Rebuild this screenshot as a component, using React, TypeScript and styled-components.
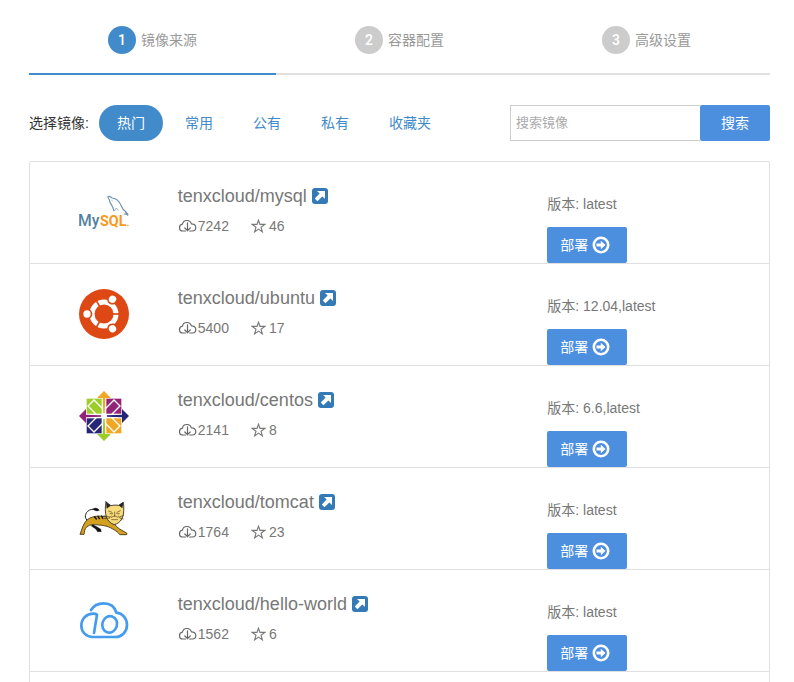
import React from 'react';
import styled, { createGlobalStyle } from 'styled-components';

const GlobalStyle = createGlobalStyle`
  *, *::before, *::after { box-sizing: border-box; }
  body {
    margin: 0;
    background: #fff;
    color: #333;
    font: 14px/20px "Liberation Sans", "Noto Sans CJK SC", sans-serif;
  }
  button, input { font: inherit; }
  svg { display: block; flex: none; }
`;

const Page = styled.main`
  display: flex;
  flex-direction: column;
  min-height: 100vh;
  padding: 6px 24px 0 29px;
`;

const Steps = styled.ol`
  display: grid;
  grid-template-columns: repeat(3, 1fr);
  margin: 0;
  padding: 0;
  list-style: none;
`;

const Step = styled.li<{ $active: boolean }>`
  display: flex;
  justify-content: center;
  align-items: center;
  gap: 5px;
  height: 69px;
  border-bottom: 2px solid ${p => (p.$active ? '#428bca' : '#e0e0e0')};
  color: #999;
`;

const StepNumber = styled.span<{ $active: boolean }>`
  width: 28px;
  height: 28px;
  border-radius: 50%;
  background: ${p => (p.$active ? '#428bca' : '#ccc')};
  color: #fff;
  font-family: Roboto, sans-serif;
  font-weight: 500;
  line-height: 28px;
  text-align: center;
`;

const Toolbar = styled.div`
  display: flex;
  align-items: center;
  justify-content: space-between;
  margin: 30px 0 20px;
`;

const Filters = styled.nav`
  display: flex;
  align-items: center;
  gap: 4px;
  white-space: nowrap;
`;

const FilterLabel = styled.span`
  margin-right: 6px;
`;

const FilterLink = styled.a<{ $active: boolean }>`
  padding: 8px 18px;
  border-radius: 18px;
  background: ${p => (p.$active ? '#428bca' : 'transparent')};
  color: ${p => (p.$active ? '#fff' : '#428bca')};
  text-decoration: none;
`;

const Search = styled.form`
  display: flex;
  width: 260px;
`;

const SearchInput = styled.input`
  flex: 1;
  min-width: 0;
  height: 36px;
  padding: 0 5px 2px;
  border: 1px solid #ccc;
  border-right: 0;
  border-radius: 0;
  font-size: 13px;
  &::placeholder { color: #aaa; opacity: 1; }
`;

const BlueButton = styled.button`
  display: flex;
  align-items: center;
  justify-content: center;
  gap: 4px;
  height: 36px;
  padding: 0 21px;
  border: 0;
  border-radius: 2px;
  background: #4c8fdf;
  color: #fff;
  cursor: pointer;
`;

const DeployButton = styled(BlueButton)`
  padding: 0 17px 0 13px;
`;

const ImageList = styled.ul`
  flex: 1;
  margin: 0;
  padding: 0;
  border: 1px solid #e0e0e0;
  border-bottom: 0;
  border-radius: 2px 2px 0 0;
  list-style: none;
`;

const ImageRow = styled.li`
  display: grid;
  grid-template-columns: 20% 50% 30%;
  height: 102px;
  border-bottom: 1px solid #e0e0e0;
  color: #777;
`;

const LogoCell = styled.div`
  display: flex;
  align-items: center;
  justify-content: center;
  height: 100px;
`;

const Info = styled.div`
  padding-top: 24px;
`;

const Title = styled.h2`
  display: flex;
  align-items: center;
  gap: 5px;
  margin: 0 0 10px;
  font-size: 18px;
  font-weight: 400;
  line-height: 20px;
`;

const OpenLink = styled.a`
  color: #337ab7;
`;

const Stats = styled.div`
  display: flex;
  gap: 22px;
`;

const Stat = styled.span<{ $gap: number }>`
  display: flex;
  align-items: center;
  gap: ${p => p.$gap}px;
`;

const Release = styled.div`
  padding-top: 32px;
`;

const Version = styled.p`
  margin: 0 0 13px;
`;

const OpenIcon = () => (
  <svg width="16" height="16" viewBox="0 0 16 16" aria-hidden="true">
    <rect width="16" height="16" rx="3" fill="currentColor" />
    <path d="M5 3h8v8l-2.600-2.600-5 4.800-2.600-2.600 4.800-5z" fill="#fff" />
  </svg>
);

const CloudIcon = () => (
  <svg width="19" height="14" viewBox="0 0 19 14" fill="none" stroke="#666" strokeWidth="1.200" strokeLinecap="round" strokeLinejoin="round" aria-hidden="true">
    <path d="M7.500 12H5C3 12 1.500 10.600 1.500 8.700c0-1.900 1.300-3.300 3-3.500C4.800 2.900 6.600 1.500 8.900 1.500c2.300 0 4 1.400 4.500 3.400 2.500-.1 4.400 1.400 4.400 3.600 0 2-1.500 3.500-3.500 3.500h-2.600" />
    <path d="M9.500 3.800v8M6.800 9l2.700 2.700L12.200 9" />
  </svg>
);

const StarIcon = () => (
  <svg width="15" height="14" viewBox="0 0 15 14" fill="none" stroke="#777" strokeWidth="1.100" strokeLinejoin="miter" aria-hidden="true">
    <path d="M7.500 1.200 9 5.400h4.900L10 8.200l1.400 4.700-3.900-2.800-3.900 2.800L5 8.200 1.100 5.400H6z" />
  </svg>
);

const ArrowIcon = () => (
  <svg width="18" height="18" viewBox="0 0 18 18" aria-hidden="true">
    <circle cx="9" cy="9" r="7.200" fill="none" stroke="#fff" strokeWidth="2.600" />
    <path d="M4.500 7.600h4.300V4.700L13.500 9l-4.700 4.300v-2.900H4.500z" fill="#fff" />
  </svg>
);

const MysqlLogo = () => (
  <svg width="50" height="50" viewBox="27 21 150 150" role="img" aria-label="MySQL">
    <g fontFamily="Roboto, sans-serif">
      <text x="24" y="138" fontSize="47" fontWeight="500" fill="#5382a1">My</text>
      <text x="90" y="138" fontSize="43" fontWeight="700" fill="#f8981d">SQL</text>
    </g>
    <path d="M171 136h5" stroke="#f8981d" strokeWidth="3" />
    <path d="M133 93c-4-3-3-9-6-14-4-8-9-12-9-20-4-4-6-10-1-10 4 0 7 4 10 5 13 1 22 12 27 24 3 8 5 12 12 16l8 9-12-1m4-6 8 11" fill="none" stroke="#6d91aa" strokeWidth="3.500" strokeLinejoin="round" />
    <path d="M133 93l6-9 6 8M124 60l4 3" fill="none" stroke="#6d91aa" strokeWidth="2" />
  </svg>
);

const UbuntuLogo = () => (
  <svg width="50" height="50" viewBox="-75 -75 150 150" role="img" aria-label="Ubuntu">
    <circle r="75" fill="#dd4814" />
    <circle r="36" fill="none" stroke="#fff" strokeWidth="15" />
    {[60, 180, 300].map(angle => (
      <g key={angle} transform={`rotate(${angle})`}>
        <path d="M-26 0h-22" stroke="#dd4814" strokeWidth="5" />
        <circle cx="51" r="16" fill="#dd4814" />
        <circle cx="51" r="11" fill="#fff" />
      </g>
    ))}
  </svg>
);

const quadrants = [
  { angle: 0, square: '#9ccd2a', arrow: '#efa724' },
  { angle: 90, square: '#932279', arrow: '#262577' },
  { angle: 180, square: '#efa724', arrow: '#9ccd2a' },
  { angle: 270, square: '#262577', arrow: '#932279' },
];

const CentosLogo = () => (
  <svg width="50" height="50" viewBox="-75 -75 150 150" role="img" aria-label="CentOS">
    {quadrants.map(q => (
      <g key={q.angle} transform={`rotate(${q.angle})`}>
        <path d="M-52-52h45v45h-45z" fill={q.square} />
        <path d="M-4-22-30-48-48-30-22-4" fill="none" stroke="#fff" strokeWidth="4" />
      </g>
    ))}
    {quadrants.map(q => (
      <path
        key={q.angle}
        transform={`rotate(${q.angle})`}
        d="M0-75 21-54H4L2-8h-4l-2-46h-17z"
        fill={q.arrow}
      />
    ))}
    <circle r="8" fill="#fff" />
  </svg>
);

const TomcatLogo = () => (
  <svg width="50" height="50" viewBox="27 9 150 150" role="img" aria-label="Tomcat" strokeLinejoin="round" strokeLinecap="round">
    <path d="M59 97C44 90 42 74 53 64c6-6 15-7 22-5" fill="none" stroke="#222" strokeWidth="3" />
    <path d="M69 57c7-5 14-3 19 4-7 3-13 2-19-4z" fill="#111" stroke="#111" />
    <path d="M67 103l25 14 2 8H82c-1-8-12-12-18-17z" fill="#111" stroke="#111" />
    <path d="M31 131c5-14 9-31 20-41 10-9 24-12 38-12l24 3c16 9 20 27 37 37l18 10c5 3 4 6 0 6h-17c-5-1-5-5-9-8-18-14-35-20-56-21-15-2-26-2-35 5-8 6-7 16-9 23H31z" fill="#d3a020" stroke="#382b10" strokeWidth="2.500" />
    <path d="M74 81l5 6M84 79l4 7M95 78l3 7" stroke="#111" strokeWidth="4" />
    <path d="M108 36l15 11c7-2 17-2 23-1l14-9c2 13 3 36-4 49-5 10-15 16-23 18-11-4-20-11-24-23-4-14-4-30-1-45z" fill="#f8dc7c" stroke="#222" strokeWidth="2.500" />
    <path d="M108 36l14 11-12 9zM160 37l-14 9 11 9z" fill="#222" />
    <path d="M116 63l10 4M141 67l10-5M120 71h8M140 71h8M134 66v14M124 82l10-5 10 5M124 78l-6 6M145 78l6 6M125 89h18M102 77l17 4M101 86l17-2M150 80l10-3M150 84l10 3" fill="none" stroke="#54441e" strokeWidth="2" />
  </svg>
);

const HelloLogo = () => (
  <svg width="50" height="50" viewBox="27 15 150 150" role="img" aria-label="TenxCloud" fill="none" stroke="#459cee" strokeWidth="8" strokeLinecap="round" strokeLinejoin="round">
    <path d="M63 60c8-13 22-20 38-20 20 0 33 10 38 28 19 2 32 17 32 37 0 20-15 36-35 36H68c-19 0-34-16-34-34 0-22 16-36 36-36 5 0 8 1 11 3l-9 55" />
    <ellipse cx="119" cy="103" rx="22" ry="25" transform="rotate(18 119 103)" />
  </svg>
);

const steps = ['镜像来源', '容器配置', '高级设置'];
const filters = ['热门', '常用', '公有', '私有', '收藏夹'];
const images = [
  { name: 'mysql', Logo: MysqlLogo, downloads: 7242, stars: 46, version: 'latest' },
  { name: 'ubuntu', Logo: UbuntuLogo, downloads: 5400, stars: 17, version: '12.04,latest' },
  { name: 'centos', Logo: CentosLogo, downloads: 2141, stars: 8, version: '6.6,latest' },
  { name: 'tomcat', Logo: TomcatLogo, downloads: 1764, stars: 23, version: 'latest' },
  { name: 'hello-world', Logo: HelloLogo, downloads: 1562, stars: 6, version: 'latest' },
];

export default function App() {
  return (
    <Page>
      <GlobalStyle />
      <Steps>
        {steps.map((label, i) => (
          <Step key={label} $active={i === 0}>
            <StepNumber $active={i === 0}>{i + 1}</StepNumber>
            {label}
          </Step>
        ))}
      </Steps>
      <Toolbar>
        <Filters>
          <FilterLabel>选择镜像:</FilterLabel>
          {filters.map((label, i) => (
            <FilterLink key={label} href="#" $active={i === 0}>{label}</FilterLink>
          ))}
        </Filters>
        <Search onSubmit={e => e.preventDefault()}>
          <SearchInput type="text" placeholder="搜索镜像" aria-label="搜索镜像" />
          <BlueButton type="submit">搜索</BlueButton>
        </Search>
      </Toolbar>
      <ImageList>
        {images.map(({ name, Logo, downloads, stars, version }) => (
          <ImageRow key={name}>
            <LogoCell><Logo /></LogoCell>
            <Info>
              <Title>
                tenxcloud/{name}
                <OpenLink href="#" aria-label={`tenxcloud/${name}`}><OpenIcon /></OpenLink>
              </Title>
              <Stats>
                <Stat $gap={1}><CloudIcon />{downloads}</Stat>
                <Stat $gap={3}><StarIcon />{stars}</Stat>
              </Stats>
            </Info>
            <Release>
              <Version>版本: {version}</Version>
              <DeployButton type="button">部署<ArrowIcon /></DeployButton>
            </Release>
          </ImageRow>
        ))}
      </ImageList>
    </Page>
  );
}
